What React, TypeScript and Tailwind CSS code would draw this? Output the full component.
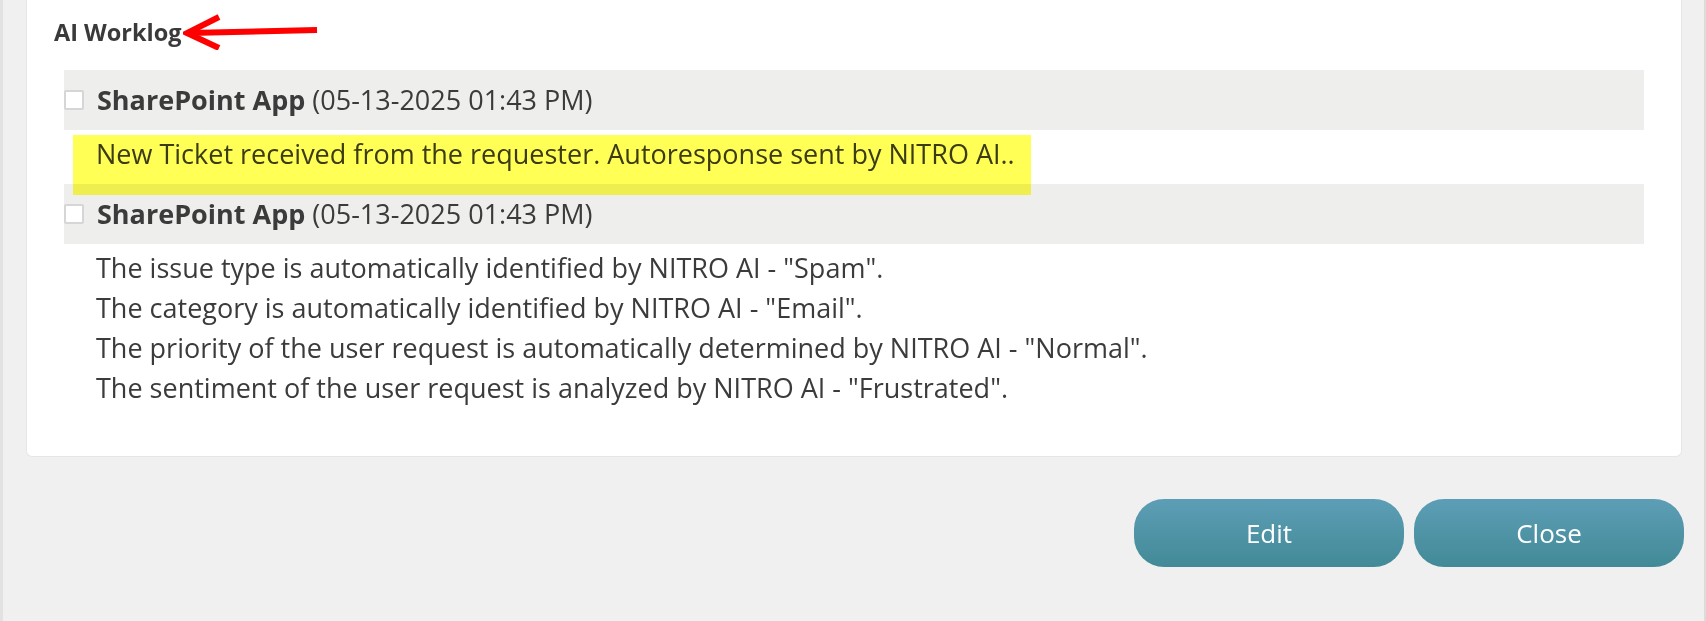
import React from "react";

const entries = [
  {
    author: "SharePoint App",
    stamp: "(05-13-2025 01:43 PM)",
    lines: ["New Ticket received from the requester. Autoresponse sent by NITRO AI.."],
    highlight: true,
  },
  {
    author: "SharePoint App",
    stamp: "(05-13-2025 01:43 PM)",
    lines: [
      'The issue type is automatically identified by NITRO AI - "Spam".',
      'The category is automatically identified by NITRO AI - "Email".',
      'The priority of the user request is automatically determined by NITRO AI - "Normal".',
      'The sentiment of the user request is analyzed by NITRO AI - "Frustrated".',
    ],
    highlight: false,
  },
];

function RedArrow() {
  return (
    <svg width="136" height="36" viewBox="0 0 136 36" className="ml-[1px] -mt-[2px] shrink-0">
      <line x1="6" y1="19" x2="134" y2="16" stroke="#ff0000" strokeWidth="6" />
      <polyline
        points="36,3 4,19 36,34"
        fill="none"
        stroke="#ff0000"
        strokeWidth="6"
        strokeLinejoin="miter"
        strokeMiterlimit="10"
      />
    </svg>
  );
}

function Checkbox() {
  return <span className="block h-[20px] w-[20px] shrink-0 rounded-[2px] border-2 border-[#d6d6d6] bg-white" />;
}

function WorklogEntry({ author, stamp, lines, highlight }: (typeof entries)[number]) {
  return (
    <div>
      <div className="flex h-[60px] items-center bg-[#eeeeec]">
        <Checkbox />
        <span className="ml-[13px] text-[27px] leading-[60px] text-[#3b3b3b]">
          <span className="font-bold">{author}</span> {stamp}
        </span>
      </div>
      <div className="relative pb-[10px] pl-[32px] pt-[4px] text-[27px] leading-[40px] text-[#3b3b3b]">
        {lines.map((line) => (
          <p key={line}>{line}</p>
        ))}
        {highlight && (
          <div className="pointer-events-none absolute left-[9px] top-[5px] z-10 h-[60px] w-[958px] bg-[#ffff55] mix-blend-multiply" />
        )}
      </div>
    </div>
  );
}

export default function App() {
  return (
    <div className="min-h-[621px] border-l-[3px] border-r-2 border-l-[#e2e2e2] border-r-[#dcdcdc] bg-[#f0f0f0] font-['Open_Sans',sans-serif]">
      <div className="ml-[23px] mr-[22px] rounded-b-[6px] border-x border-b border-[#e6e6e6] bg-white pb-[38px] pl-[27px] pt-[16px]">
        <div className="flex items-start">
          <h2 className="text-[23.5px] font-bold leading-[32px] text-[#3a3a3a]">AI Worklog</h2>
          <RedArrow />
        </div>
        <div className="relative mr-[37px] mt-[20px] ml-[10px]">
          {entries.map((e, i) => (
            <WorklogEntry key={i} {...e} />
          ))}
        </div>
      </div>
      <div className="mr-[20px] mt-[42px] flex justify-end gap-[10px]">
        <button className="h-[68px] w-[270px] rounded-[30px] bg-gradient-to-b from-[#5d9eb6] to-[#428a97] text-[26px] text-white">
          Edit
        </button>
        <button className="h-[68px] w-[270px] rounded-[30px] bg-gradient-to-b from-[#5d9eb6] to-[#428a97] text-[26px] text-white">
          Close
        </button>
      </div>
    </div>
  );
}
